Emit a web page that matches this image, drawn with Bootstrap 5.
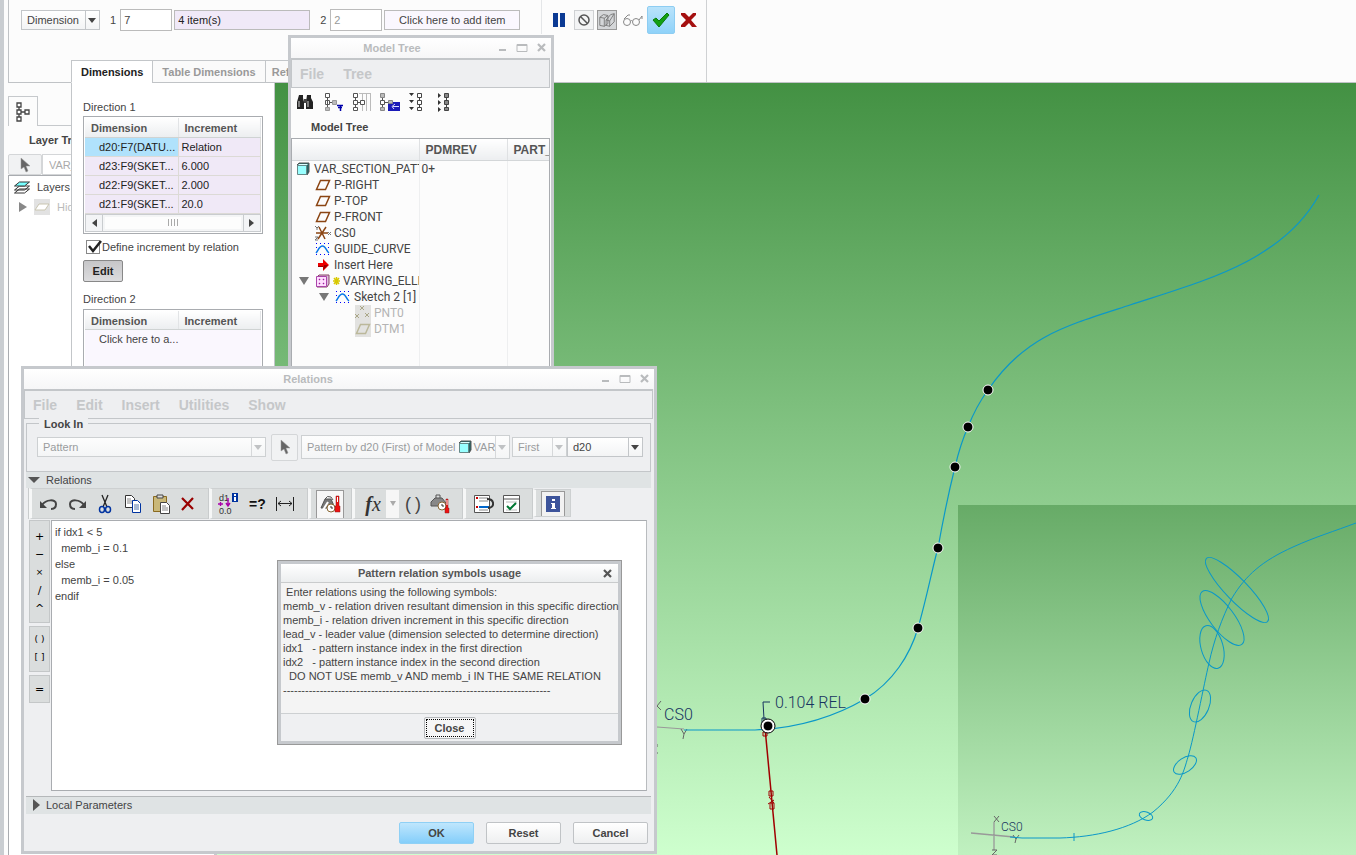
<!DOCTYPE html>
<html lang="en">
<head>
<meta charset="utf-8">
<meta name="viewport" content="width=device-width, initial-scale=1">
<title>Pattern relations</title>
<link href="https://cdn.jsdelivr.net/npm/bootstrap@5.3.0/dist/css/bootstrap.min.css" rel="stylesheet">
<style>
  :root { --edge:#c6c9cd; --line:#c3c6c9; --face:#eeeff1; --ink:#444; --dim:#b9bbbd; }
  html, body { height:100%; }
  body { font:11px/14px "Liberation Sans", Arial, sans-serif; color:var(--ink); background:#fcfcfc; }
  button, input, select, textarea { font:inherit; color:inherit; }
  svg { display:block; flex:none; }
  .app { height:100vh; min-height:855px; border-left:4px solid #c9cdd1; padding-left:4px; }
  .flat { border:0; background:none; padding:0; display:flex; align-items:center; justify-content:center; }

  /* ribbon */
  .ribbon { height:83px; border-bottom:1px solid #c0c3c6; border-left:1px solid #c0c3c6; }
  .ribbon-group { width:698px; height:82px; flex:none; border-right:1px solid #cfd1d3; padding:6px 0 0 12px; }
  .strip { height:28px; }
  .strip label { padding:0 4px 0 10px; }
  .strip .divider { width:33px; height:37px; margin-top:-9px; background:linear-gradient(#e4e6e8,#e4e6e8) 21px 0/1px 100% no-repeat; }
  .field { height:22px; border:1px solid #bbb; background:#fff; padding:0 3px; border-radius:0; min-width:0; }
  .pick { position:relative; display:flex; height:20px; border:1px solid #c3c6c9; background:linear-gradient(#fff,#f3f4f5); }
  .pick select, .pick .flat { appearance:none; border:0; background:none; width:100%; padding:0 14px 0 5px; line-height:18px; }
  .pick::before { content:""; position:absolute; right:0; top:0; bottom:0; width:14px; border-left:1px solid #c3c6c9; pointer-events:none; }
  .pick::after { content:""; position:absolute; right:3px; top:50%; margin-top:-2px; border:4px solid transparent; border-top:5px solid #444; border-bottom:0; pointer-events:none; }
  .pick.off { color:#9a9c9e; border-color:#cdd0d2; background:linear-gradient(#fdfdfd,#f4f5f6); }
  .pick.off::before { border-color:#d6d8da; }
  .pick.off::after { border-top-color:#c0c2c4; }
  .pick select:disabled { opacity:1; color:inherit; }
  .sq { width:20px; height:20px; border:1px solid #cfd1d3; background:#f3f4f5; }
  .accept { width:28px; height:28px; border:1px solid #8ecdf2; border-radius:2px; background:linear-gradient(#b9e3fb,#8fd2f9); }
  .tabs { width:290px; overflow:hidden; padding-left:63px; margin-top:-22px; position:relative; z-index:2; flex:none; }
  .tabs button { height:23px; border:1px solid #c3c6c9; border-bottom:1px solid #c0c3c6; background:#fafafa; color:#999; font-weight:700; padding:0 9px; margin:0 0 0 -1px; white-space:nowrap; flex:none; }
  .tabs button:last-child { padding:0 6px; }
  .tabs button.on { background:#fff; color:#222; border-bottom-color:#fff; }

  /* layer tree on the left */
  .layers { width:209px; border-right:3px solid var(--edge); padding-top:13px; }
  .layers .tabcell { width:30px; height:30px; border:1px solid #c6c9cc; border-bottom:0; }
  .layers .rest { border-bottom:1px solid #c6c9cc; }
  .cursor-btn { border:1px solid #d4d6d8; background:#f1f2f3; border-radius:2px; }

  /* slide-down panel under the ribbon tabs */
  .slide { position:absolute; left:63px; top:0; width:204px; height:300px; background:#fff; border:solid #c3c6c9; border-width:0 1px; padding:17px 11px 0 11px; }
  .grid { border:1px solid #a9acb0; padding:1px; }
  .grid table { width:100%; table-layout:fixed; }
  .grid th { height:19px; padding:2px 6px 0; background:linear-gradient(#fff,#eceef0); color:#555; border-bottom:1px solid #cfd3d3; border-right:1px solid #e2e4e6; }
  .grid td { height:19px; padding:0 3px; background:#f0e9f7; border-bottom:1px solid #dcdad6; border-right:1px solid #dcdad6; color:#222; white-space:nowrap; overflow:hidden; }
  .grid td:first-child { padding-left:14px; }
  .grid td.sel { background:#b0e2fc; }
  .grid td.blank { background:#faf7fe; border:0; color:#444; }
  .sb { height:18px; border:1px solid #c9cccf; background:#f3f4f6; }
  .sb .end { width:16px; }
  .sb .thumb { border:1px solid #c9cccf; border-width:0 1px; background:#fdfdfd; box-shadow:inset 0 0 0 2px #f4f5f6; }
  .tick { appearance:none; width:14px; height:14px; margin:0; border:1px solid #888; background:#fff; }
  .edit { height:22px; width:40px; border:1px solid #888; border-radius:2px; background:linear-gradient(#c6c6c8,#dcdcde); font-weight:700; color:#222; padding:0; }

  /* windows */
  .win { position:absolute; z-index:5; border:3px solid var(--edge); background:#fcfcfc; }
  .bar { height:20px; background:linear-gradient(#fff,#f6f6f7); color:var(--dim); font-weight:700; text-align:center; position:relative; padding-right:58px; }
  .winctl { position:absolute; right:4px; top:0; height:20px; gap:9px; }
  .menus { height:30px; background:var(--face); border:1px solid var(--line); border-top-width:2px; margin-right:1px; gap:19px; padding-left:8px; }
  .menus button { font-size:14px; font-weight:700; color:#c5c7c9; }
  .mtree { left:284px; top:35px; width:266px; height:335px; }
  .mtree .icons { height:29px; padding:5px 0 0 5px; gap:9px; }
  .mtree .box { border:1px solid #a9acb0; border-bottom:0; margin-right:1px; flex:1; overflow:hidden; }
  .mtree table { width:257px; table-layout:fixed; font:12px/16px Roboto, sans-serif; color:#444; }
  .mtree th { height:21px; padding:2px 6px 0; font:bold 12px/18px "Liberation Sans", sans-serif; color:#555; background:linear-gradient(#fff,#eceef0); border-bottom:1px solid #d3d6d8; border-right:1px solid #dfe1e3; overflow:hidden; }
  .mtree th:last-child { border-right:0; }
  .mtree td { height:16px; padding:0 2px; border-right:1px solid #eeeff0; overflow:hidden; white-space:nowrap; }
  .mtree td:last-child { border-right:0; }
  .mtree tr.fill td { height:60px; }
  .node { display:flex; align-items:center; height:16px; gap:3px; }
  .in1 { padding-left:21px; }
  .in2 { padding-left:26px; }
  .in3 { padding-left:61px; color:#b4b4b4; }
  .tri { border:5px solid transparent; border-top:8px solid #777; border-bottom:0; flex:none; }
  .trir { border:5px solid transparent; border-left:8px solid #888; border-right:0; flex:none; }

  .rel { left:17px; top:366px; width:636px; background:var(--face); }
  .look { border:1px solid var(--line); height:49px; margin:4px 3px 0 2px; padding:13px 7px 0 10px; position:relative; }
  .look legend { position:absolute; left:12px; top:-7px; width:auto; padding:0 5px; margin:0; font:bold 11px/14px "Liberation Sans", sans-serif; background:var(--face); color:#444; float:none; }
  .band { height:16px; background:#dfe3e4; margin:0 3px 0 2px; }
  .band button { gap:6px; height:16px; padding-left:2px; }
  .tools { height:32px; padding-left:5px; }
  .grp { height:31px; background:#dadddd; border:1px solid #cdd0d1; border-left:3px solid #f6f7f7; box-shadow:-1px 0 0 #c9cccd; }
  .pressed { border:1px solid #999; border-bottom:0; background:#f7f7f7; width:28px; height:28px; }
  .ops { width:21px; margin-right:1px; }
  .ops > div { background:#dadddd; border:1px solid #c4c7c8; margin-bottom:3px; }
  .ops button { font:11px/17px "DejaVu Sans", sans-serif; height:18px; width:100%; color:#000; }
  .ops button.fine { font-size:9px; }
  .editor { height:271px; border:1px solid #a9acb0; border-right-color:#b9bcbf; padding:3px; line-height:16px; resize:none; display:block; flex:1; background:#fff; border-radius:0; }
  .cmd { width:75px; height:22px; border:1px solid #c0c3c6; border-radius:2px; background:linear-gradient(#fff,#eeeff0); font-weight:700; padding:0; }
  .cmd.ok { border-color:#8fd0f5; background:linear-gradient(#bfe6fd,#84cefa); }

  .help { left:273px; top:560px; width:345px; border:1px solid #999; box-shadow:inset 0 0 0 3px var(--edge); padding:3px; background:#f4f4f4; }
  .help .bar { height:19px; padding-right:0; color:#555; background:linear-gradient(#fff,#eceeef); border-bottom:1px solid #c9cbcc; }
  .help pre { font:inherit; margin:0; padding:2px 0 0 2px; overflow:visible; }
  .help .foot { border-top:1px solid #cdd0d2; background:#eff0f2; height:28px; }
  .close-cmd { width:52px; height:22px; border:1px solid #b4b7ba; border-radius:2px; background:#f6f6f7; padding:1px; font-weight:700; }
  .close-cmd span { display:block; border:1px dotted #000; line-height:16px; }

  /* graphics area */
  .stage { background:linear-gradient(#439143,#ceffce); overflow:hidden; }
  .stage text { font-family:Roboto, sans-serif; font-weight:300; }
</style>
</head>
<body>
<svg width="0" height="0" class="position-absolute">
  <symbol id="plane" viewBox="0 0 16 16"><path d="M5.500 3.500h9l-4 9h-9z" fill="none" stroke="currentColor" stroke-width="1.500"/></symbol>
  <symbol id="sketch" viewBox="0 0 16 16"><g fill="#00f"><path d="M1 2h1v1H1zM5 2h1v1H5zM9 2h1v1H9zM13 2h1v1h-1zM1 6h1v1H1zM13 6h1v1h-1zM1 13h1v1H1zM5 13h1v1H5zM9 13h1v1H9zM13 13h1v1h-1z"/></g><path d="M1 12C3 10 4 5 7.500 5S11 10 14 12" fill="none" stroke="#0a78e8" stroke-width="1.500"/></symbol>
  <symbol id="cube" viewBox="0 0 14 14"><path d="M1 3l2-2h10v9l-2 3z" fill="#266" stroke="#555"/><path d="M1.500 3.500h9v9h-9z" fill="#9ff" stroke="#688"/><path d="M3 2h9l-1 1H2z" fill="#dff"/></symbol>
  <symbol id="cursor" viewBox="0 0 12 16"><path d="M2 1v11l3-2 2 5 2-1-2-5h4z" fill="#666" stroke="#999" stroke-width=".5"/></symbol>
  <symbol id="tree" viewBox="0 0 16 20"><g fill="#fff" stroke="currentColor" stroke-width="1.300"><path d="M4 5v10M6 10h4" /><path d="M2 1h4v4H2zM2 8h4v4H2zM2 15h4v4H2zM10 8h4v4h-4z"/></g></symbol>
  <symbol id="x" viewBox="0 0 10 10"><path d="M1 1l7 7M8 1L1 8" stroke="currentColor" stroke-width="2.200"/></symbol>
</svg>

<div class="app d-flex flex-column position-relative overflow-hidden">
  <header class="ribbon d-flex flex-column">
    <div class="ribbon-group">
      <div class="strip d-flex align-items-center">
        <div class="pick" style="width:79px"><select aria-label="Pattern type"><option>Dimension</option></select></div>
        <label for="n1">1</label>
        <input id="n1" class="field" style="width:52px;margin-right:2px" value="7">
        <input class="field" style="width:136px;height:20px;background:#f0e9f8;color:#222" value="4 item(s)" aria-label="First direction items">
        <label for="n2">2</label>
        <input id="n2" class="field" style="width:52px;color:#999" value="2">
        <input class="field text-center" style="width:136px;height:20px;margin-left:2px;background:#faf7fe" value="Click here to add item" aria-label="Second direction items">
        <span class="divider"></span>
        <button class="flat" aria-label="Pause"><svg width="12" height="14"><path d="M0 0h5v14H0zM7 0h5v14H7z" fill="#0b3a94"/></svg></button>
        <button class="flat sq" style="margin-left:9px" aria-label="No preview"><svg width="14" height="14"><circle cx="7" cy="7" r="5" fill="none" stroke="#555" stroke-width="1.500"/><path d="M3.500 3.500l7 7" stroke="#555" stroke-width="1.500"/></svg></button>
        <button class="flat sq" style="margin:0 5px 0 3px;background:#d4d6d8;border-color:#999" aria-label="Attached preview"><svg width="18" height="18" viewBox="0 0 20 18" fill="none" stroke="#777"><path d="M2 6l4-3 5 1v9l-4 3-5-1zM2 6l5 1v9M7 7l4-3M9 9l5-6 4-1v9l-5 5-4-1zM9 9l4 1v6M13 10l5-8"/></svg></button>
        <button class="flat" aria-label="Glasses"><svg width="21" height="14" fill="none" stroke="#888"><circle cx="5" cy="9" r="3.500"/><circle cx="14" cy="9" r="3.500"/><path d="M8.500 8q1-1 2 0M2 6l4-4h2M17 7l3-4v3"/></svg></button>
        <button class="flat accept ms-1" aria-label="Accept"><svg width="18" height="16"><path d="M1 8l3-2 3 3 8-8 2 2L7 15z" fill="#12a012" stroke="#0a7a0a"/></svg></button>
        <button class="flat" style="margin-left:5px" aria-label="Cancel feature"><svg width="18" height="16"><path d="M1 1h4l4 4 4-4h3v2l-5 5 6 7h-5l-3-4-4 4H1v-2l5-5-5-5z" fill="#a51010"/></svg></button>
      </div>
    </div>
    <nav class="tabs d-flex">
      <button class="on">Dimensions</button><button>Table Dimensions</button><button>References</button>
    </nav>
  </header>

  <main class="d-flex flex-grow-1 position-relative">
    <aside class="layers d-flex flex-column flex-shrink-0">
      <div class="d-flex"><div class="tabcell d-flex align-items-center justify-content-center"><svg width="16" height="20" color="#444"><use href="#tree"/></svg></div><div class="rest flex-grow-1"></div></div>
      <div class="fw-bold" style="padding:7px 0 7px 21px">Layer Tree</div>
      <div class="d-flex ps-0">
        <button class="flat cursor-btn" style="width:34px;height:21px" aria-label="Select"><svg width="12" height="16"><use href="#cursor"/></svg></button>
        <input class="field flex-grow-1" style="height:21px;color:#aaa;padding-left:6px;border-color:#d4d6d8" value="VAR_SECTION_PATTERN" aria-label="Active model">
      </div>
      <div class="bg-white flex-grow-1" style="padding:3px 4px;border:1px solid #a9acb0;border-width:1px 0 0 1px">
        <div class="node" style="gap:6px"><svg width="18" height="16" stroke="#333"><path d="M1.500 14l5-4h10l-5 4zM1.500 11l5-4h10l-5 4z" fill="#fff"/><path d="M1.500 7l5-4h10l-5 4z" fill="#7ff"/></svg>Layers</div>
        <div class="node" style="margin-top:4px;padding-left:6px;gap:7px;color:#bbb"><span class="trir"></span><svg width="16" height="16"><path d="M0 0h16v16H0z" fill="#e2e2e2"/><path d="M1 11l4-6h10l-4 6z" fill="#fff" stroke="#c9c5b0"/></svg>Hidden Items</div>
      </div>
    </aside>

    <section class="stage flex-grow-1">
      <svg width="100%" height="100%" viewBox="217 83 1139 772" preserveAspectRatio="xMinYMin slice" fill="none">
        <defs><linearGradient id="g2" x1="0" y1="0" x2="0" y2="1"><stop stop-color="#67ab67"/><stop offset="1" stop-color="#c0f1c0"/></linearGradient></defs>
        <path d="M657 727L684 729" stroke="#999"/>
        <path d="M661 701l-4 5 4 4M657 744v3M657 752v2" stroke="#666"/>
        <path d="M681 729l3 5 3-5M684 734l-1 5" stroke="#666"/>
        <path d="M684 730H755C800 728 836 716 865 699C893 682 910 655 918 628C927 597 933 565 938 548C943 520 948 495 955 467C959 450 963 438 968 427C973 414 980 401 988 390C1025 336 1065 326 1130 305C1200 282 1282 262 1319 195" stroke="#0b98c8" stroke-width="1.200"/>
        <path d="M765 728L777 855" stroke="#a00000" stroke-width="1.500"/>
        <path d="M769 791h4v5h-4zM770 803h4v6h-4zM768 804l6-4M769 797l5 6M761 728h9M763 732h4v4h-4z" stroke="#a00000"/>
        <path d="M770 702h-7l1 17v8M762 718h4v6h-4z" stroke="#17345f"/>
        <g fill="#000" stroke="#fff"><circle cx="988" cy="390" r="5"/><circle cx="968" cy="427" r="5"/><circle cx="955" cy="467" r="5"/><circle cx="938" cy="548" r="5"/><circle cx="918" cy="628" r="5"/><circle cx="865" cy="699" r="5"/><circle cx="768" cy="726" r="7" stroke="#000" fill="#fff"/><circle cx="768" cy="726" r="5"/></g>
        <text x="664" y="720" font-size="16" fill="#17345f">CS0</text>
        <text x="775" y="708" font-size="16" fill="#17345f">0.104 REL</text>
        <path d="M958 505h398v350H958z" fill="url(#g2)"/>
        <path d="M971 833l43 4M994 822v28" stroke="#999" stroke-width="1.300"/>
        <path d="M994 816l5 6M999 816l-5 6M992 850h5l-5 5h5M1013 835l3 4 3-4M1016 839l-1 4" stroke="#666"/>
        <g stroke="#0b98c8">
          <path d="M1010 837L1022 838H1060C1095 837 1130 829 1153 812C1180 790 1184 770 1188 757C1194 737 1204 684 1209 663C1214 640 1222 618 1232 598C1246 575 1262 561 1293 547C1315 537 1335 531 1356 523M1074 833v8"/>
          <ellipse cx="1237" cy="590" rx="44" ry="11" transform="rotate(46 1237 590)"/>
          <ellipse cx="1222" cy="618" rx="33" ry="12" transform="rotate(53 1222 618)"/>
          <ellipse cx="1212" cy="647" rx="22" ry="11" transform="rotate(74 1212 647)"/>
          <ellipse cx="1200" cy="706" rx="17" ry="9" transform="rotate(-67 1200 706)"/>
          <ellipse cx="1185" cy="765" rx="13" ry="7" transform="rotate(-34 1185 765)"/>
          <ellipse cx="1146" cy="816" rx="7" ry="4" transform="rotate(20 1146 816)"/>
        </g>
        <text x="1001" y="831" font-size="12" fill="#17345f">CS0</text>
      </svg>
    </section>

    <section class="slide">
      <div>Direction 1</div>
      <div class="grid" style="margin-top:2px">
        <table>
          <colgroup><col style="width:93px"><col></colgroup>
          <thead><tr><th>Dimension</th><th>Increment</th></tr></thead>
          <tbody>
            <tr><td class="sel">d20:F7(DATU...</td><td>Relation</td></tr>
            <tr><td>d23:F9(SKET...</td><td>6.000</td></tr>
            <tr><td>d22:F9(SKET...</td><td>2.000</td></tr>
            <tr><td>d21:F9(SKET...</td><td>20.0</td></tr>
          </tbody>
        </table>
        <div class="sb d-flex">
          <button class="flat end" aria-label="Scroll left"><svg width="6" height="8"><path d="M6 0v8L1 4z" fill="#444"/></svg></button>
          <div class="thumb flex-grow-1 d-flex align-items-center justify-content-center"><svg width="12" height="7"><path d="M1.500 0v7M4.500 0v7M7.500 0v7M10.500 0v7" stroke="#aaa"/></svg></div>
          <button class="flat end" aria-label="Scroll right"><svg width="6" height="8"><path d="M0 0v8l5-4z" fill="#444"/></svg></button>
        </div>
      </div>
      <div class="d-flex align-items-center position-relative" style="padding:6px 0 0 3px">
        <input id="rel" type="checkbox" class="tick" checked><label for="rel" style="padding-left:2px;white-space:nowrap">Define increment by relation</label>
        <svg class="position-absolute pe-none" style="left:4px" width="16" height="14"><path d="M2 6l4 5 8-10" fill="none" stroke="#222" stroke-width="2.500"/></svg>
      </div>
      <button class="edit" style="margin-top:6px">Edit</button>
      <div style="margin-top:10px">Direction 2</div>
      <div class="grid" style="margin-top:3px">
        <table>
          <colgroup><col style="width:93px"><col></colgroup>
          <thead><tr><th>Dimension</th><th>Increment</th></tr></thead>
          <tbody><tr><td class="blank" colspan="2">Click here to a...</td></tr><tr><td class="blank" colspan="2"></td></tr></tbody>
        </table>
      </div>
    </section>
  </main>

  <!-- Model tree window -->
  <section class="win mtree d-flex flex-column">
    <div class="bar d-flex align-items-center justify-content-center">Model Tree
      <div class="winctl d-flex align-items-center"><svg width="8" height="10"><path d="M0 6h7v2H0z" fill="#b9bbbd"/></svg><svg width="12" height="10"><path d="M1 1.500h10v7H1z" fill="none" stroke="#b9bbbd"/><path d="M1 1h10v2H1z" fill="#b9bbbd"/></svg><button class="flat" aria-label="Close tree"><svg width="10" height="10"><use href="#x"/></svg></button></div>
    </div>
    <div class="menus d-flex"><button class="flat">File</button><button class="flat">Tree</button></div>
    <div class="icons d-flex align-items-start">
      <button class="flat" aria-label="Find"><svg width="18" height="18"><path d="M3 2h4v3l1 4v7H1V9zM11 2h4v3l2 4v7h-7V9z" fill="#222"/><path d="M8 6h3v4H8z" fill="#444"/><path d="M3 8v6M12 8v6" stroke="#999" stroke-width="1.500"/></svg></button>
      <button class="flat" aria-label="Filters"><svg width="20" height="20" fill="#fff" stroke="#555"><path d="M2.500 .5h4v4h-4zM4.500 5v9M2.500 7.500h4v4h-4zM6 9.500h4"/><path d="M2.500 14.500h4v3h-4zM9.500 7.500h4v4h-4z" fill="#bbb" stroke="#999"/><path d="M14 12.500h7M15 14.500h4M17.500 13v5" stroke="#00a" stroke-width="1.500"/></svg></button>
      <button class="flat" aria-label="Columns"><svg width="19" height="20" fill="#fff" stroke="#555"><path d="M10.500 1v17M14.500 1v17M18.500 1v17M7 .5h12" stroke="#bbb"/><path d="M1.500 .5h4v4h-4zM1.500 7.500h4v4h-4zM1.500 14.500h4v3h-4zM8.500 7.500h4v4h-4zM3.500 5v2M3.500 12v2M6 9.500h2"/></svg></button>
      <button class="flat" aria-label="Settings"><svg width="20" height="20" stroke="#555"><path d="M.5 .5h4v4h-4zM.5 14.500h4v3h-4z" fill="#bbb" stroke="#888"/><path d="M.5 7.500h4v4h-4zM2.500 5v2M2.500 12v2M5 9.500h3" fill="#fff"/><path d="M8 9h12v9H8z" fill="#1a1ab8" stroke="none"/><path d="M15 11l-3 2.500 2 2.500M13 13.500h6" fill="none" stroke="#ddf"/><path d="M8.500 7.500h4v3h-4z" fill="#bbb" stroke="#888"/></svg></button>
      <button class="flat" aria-label="Expand all"><svg width="14" height="20"><path d="M0 0h5L2.500 3zM0 7h5l-2.500 3zM0 14h5l-2.500 3z" fill="#333"/><path d="M8.500 .5h4v4h-4zM8.500 7.500h4v4h-4zM8.500 14.500h4v3h-4zM10.500 5v2M10.500 12v2" fill="#fff" stroke="#444"/></svg></button>
      <button class="flat ms-1" aria-label="Collapse all"><svg width="14" height="20"><path d="M2 0v5l3-2.500zM2 7v5l3-2.500zM2 14v5l3-2.500z" fill="#333"/><path d="M8.500 .5h4v4h-4zM8.500 7.500h4v4h-4zM8.500 14.500h4v3h-4zM10.500 5v2M10.500 12v2" fill="#888" stroke="#444"/></svg></button>
    </div>
    <div class="fw-bold" style="padding:3px 0 4px 20px">Model Tree</div>
    <div class="box">
      <table>
        <colgroup><col style="width:127px"><col style="width:88px"><col></colgroup>
        <thead><tr><th></th><th>PDMREV</th><th>PART_</th></tr></thead>
        <tbody>
          <tr><td><div class="node" style="gap:4px;padding-left:2px"><svg width="14" height="14"><use href="#cube"/></svg>VAR_SECTION_PATTERN</div></td><td>0+</td><td></td></tr>
          <tr><td><div class="node in1"><svg width="16" height="16" color="#8b4513"><use href="#plane"/></svg>P-RIGHT</div></td><td></td><td></td></tr>
          <tr><td><div class="node in1"><svg width="16" height="16" color="#8b4513"><use href="#plane"/></svg>P-TOP</div></td><td></td><td></td></tr>
          <tr><td><div class="node in1"><svg width="16" height="16" color="#8b4513"><use href="#plane"/></svg>P-FRONT</div></td><td></td><td></td></tr>
          <tr><td><div class="node in1"><svg width="16" height="16"><path d="M1 8h12M4 2l6 12M11 2L3 14" stroke="#8b4513" stroke-width="1.500"/><path d="M0 1l2 2 2-2M2 3v2M13 7l3 3M16 7l-3 3M0 12h3l-3 3h3" stroke="#777" fill="none"/></svg>CS0</div></td><td></td><td></td></tr>
          <tr><td><div class="node in1"><svg width="16" height="16"><use href="#sketch"/></svg>GUIDE_CURVE</div></td><td></td><td></td></tr>
          <tr><td><div class="node in1"><svg width="16" height="16"><path d="M3 6h5V2l6 6-6 6v-4H3z" fill="#e00"/><path d="M3 9h5v1H3zM8 13l5-5H9z" fill="#900"/></svg>Insert Here</div></td><td></td><td></td></tr>
          <tr><td><div class="node" style="gap:1px;padding-left:5px"><span class="tri"></span><svg style="margin-left:5px" width="16" height="16"><path d="M2 4l2-2h10v9l-2 3H2z" fill="#dbd" stroke="#846"/><path d="M1.500 3.500h10v10h-10z" fill="#fdf" stroke="#a4a"/><path d="M4 6h1v1H4zM8 6h1v1H8zM4 10h1v1H4zM8 10h1v1H8z" fill="#808" stroke="#a3a" stroke-width=".5"/></svg><svg width="10" height="10" stroke="#d8c800" stroke-width="1.500"><path d="M4.500 1v8M1 5h7M2 2l5 6M7 2L2 8"/></svg>VARYING_ELLIPSE</div></td><td></td><td></td></tr>
          <tr><td><div class="node" style="padding-left:25px"><span class="tri"></span><svg width="16" height="16" style="margin-left:3px"><use href="#sketch"/></svg>Sketch 2 [1]</div></td><td></td><td></td></tr>
          <tr><td><div class="node in3"><svg width="16" height="16"><path d="M0 0h16v16H0z" fill="#e2e2e0"/><path d="M5 1l4 4M9 1L5 5M0 9l4 4M4 9l-4 4M10 8l4 4M14 8l-4 4" stroke="#aaa788"/></svg>PNT0</div></td><td></td><td></td></tr>
          <tr><td><div class="node in3"><svg width="16" height="16" color="#bbb89a"><path d="M0 0h16v16H0z" fill="#e2e2e0"/><use href="#plane"/></svg>DTM1</div></td><td></td><td></td></tr>
          <tr class="fill"><td></td><td></td><td></td></tr>
        </tbody>
      </table>
    </div>
  </section>

  <!-- Relations window -->
  <section class="win rel">
    <div class="bar d-flex align-items-center justify-content-center" style="padding-right:62px">Relations
      <div class="winctl d-flex align-items-center"><svg width="8" height="10"><path d="M0 6h7v2H0z" fill="#b9bbbd"/></svg><svg width="12" height="10"><path d="M1 1.500h10v7H1z" fill="none" stroke="#b9bbbd"/><path d="M1 1h10v2H1z" fill="#b9bbbd"/></svg><button class="flat" aria-label="Close relations"><svg width="10" height="10"><use href="#x"/></svg></button></div>
    </div>
    <div class="menus d-flex"><button class="flat">File</button><button class="flat">Edit</button><button class="flat">Insert</button><button class="flat">Utilities</button><button class="flat">Show</button></div>
    <fieldset class="look">
      <legend>Look In</legend>
      <div class="d-flex align-items-center" style="height:20px">
        <div class="pick off" style="width:229px"><select disabled aria-label="Object type"><option>Pattern</option></select></div>
        <button class="flat cursor-btn" style="width:27px;height:27px;margin:0 3px 0 5px" aria-label="Pick object"><svg width="12" height="16"><use href="#cursor"/></svg></button>
        <div class="pick off" style="width:209px;height:24px"><button class="flat justify-content-start" style="white-space:nowrap;overflow:hidden" disabled><span style="color:#9a9c9e">Pattern by d20 (First) of Model</span><svg width="14" height="14" style="margin:0 2px"><use href="#cube"/></svg><span style="color:#9a9c9e">VAR</span></button></div>
        <div class="pick off" style="width:55px;margin-left:2px"><select disabled aria-label="Instance"><option>First</option></select></div>
        <div class="pick flex-grow-1"><select aria-label="Dimension"><option>d20</option></select></div>
      </div>
    </fieldset>
    <div class="band"><button class="flat"><span class="tri" style="border-width:6px 6px 0;border-top-color:#555"></span>Relations</button></div>
    <div class="tools d-flex">
      <div class="grp d-flex align-items-center" style="width:180px;padding-left:8px;gap:10px">
        <button class="flat" aria-label="Undo"><svg width="18" height="16" fill="none" stroke="#444" stroke-width="2"><path d="M2 9C6 3 16 3 16 8c0 3-2 5-5 5"/><path d="M0 5v7h7z" fill="#444" stroke="none"/></svg></button>
        <button class="flat" aria-label="Redo"><svg width="18" height="16" fill="none" stroke="#444" stroke-width="2"><path d="M16 9C12 3 2 3 2 8c0 3 2 5 5 5"/><path d="M18 5v7h-7z" fill="#444" stroke="none"/></svg></button>
        <button class="flat" aria-label="Cut"><svg width="18" height="20" fill="none"><path d="M6 1l5 12M12 1L7 13" stroke="#222" stroke-width="1.300"/><ellipse cx="6" cy="15.500" rx="2.500" ry="3" stroke="#0033a0" stroke-width="1.500"/><ellipse cx="12" cy="15.500" rx="2.500" ry="3" stroke="#0033a0" stroke-width="1.500"/></svg></button>
        <button class="flat" aria-label="Copy"><svg width="18" height="20" fill="#fff"><path d="M1.500 1.500h6l3 3v9h-9z" stroke="#333"/><path d="M3 5h4M3 7h6M3 9h6" stroke="#888"/><path d="M8.500 6.500h5l3 3v9h-8z" stroke="#0033a0"/><path d="M10 11h5M10 13h5M10 15h5" stroke="#57a"/></svg></button>
        <button class="flat" aria-label="Paste"><svg width="18" height="20"><path d="M1.500 2.500h13v15h-13z" fill="#c9b87a" stroke="#8a6a20"/><path d="M5 1h6v3H5z" fill="#ddd" stroke="#444"/><path d="M8.500 8.500h6l3 3v8h-9z" fill="#fff" stroke="#444"/><path d="M10 12h4M10 14h6M10 16h6" stroke="#888"/></svg></button>
        <button class="flat" aria-label="Delete"><svg width="16" height="16"><path d="M2 2l11 11M13 2L2 14" stroke="#900" stroke-width="2.200"/></svg></button>
      </div>
      <div class="grp d-flex align-items-center" style="width:99px;padding-left:6px;gap:9px">
        <button class="flat" aria-label="Switch dimensions"><svg width="22" height="22"><text x="1" y="8" font-size="9" fill="#333">d1</text><text x="1" y="21" font-size="9" fill="#333">0.0</text><path d="M14 0h6v9h-6z" fill="#0033a0"/><path d="M16 4h2v4h-2zM16 1h2v2h-2z" fill="#fff"/><path d="M0 11h5M2.500 9v4M10 5v7M8 10l2 3 2-3" stroke="#a0a" fill="none" stroke-width="1.400"/></svg></button>
        <button class="flat fw-bold" style="font-size:14px;color:#111" aria-label="Evaluate">=?</button>
        <button class="flat" aria-label="Measure"><svg width="20" height="16" fill="none" stroke="#222"><path d="M1.500 1v14M18.500 1v14M3 7.500h14M6 5L3 7.500 6 10M14 5l3 2.500-3 2.500"/></svg></button>
      </div>
      <div class="grp d-flex align-items-center" style="width:44px;padding-left:5px">
        <button class="flat pressed" aria-label="Units"><svg width="22" height="20"><path d="M2 14l4-9h6l4 9z" fill="#777" stroke="#555"/><path d="M6 5q2-4 6-2l2 3" fill="none" stroke="#555"/><path d="M4 16l5-8" stroke="#fff" stroke-width="2"/><circle cx="12" cy="14" r="4" fill="#fff" stroke="#863"/><path d="M12 12v2h2" stroke="#333" fill="none"/><path d="M17 2h3v10h1v6h-5v-6h1z" fill="#e11" stroke="#822" stroke-width=".5"/><path d="M18 3h1v5h-1z" fill="#fff"/></svg></button>
      </div>
      <div class="grp d-flex align-items-center" style="width:111px;padding-left:7px">
        <button class="flat" style="font:italic 20px/22px 'Liberation Serif',serif;color:#333;width:22px" aria-label="Insert function"><b>f</b>x</button>
        <button class="flat" style="background:#f6f6f6;width:13px;height:28px;margin-left:2px" aria-label="Function menu"><span class="tri" style="border-width:5px 3px 0;border-top-color:#aaa"></span></button>
        <button class="flat" style="font-size:18px;width:28px;gap:4px" aria-label="Insert parameter"><span>(</span><span>)</span></button>
        <button class="flat" style="margin-left:3px" aria-label="Insert units"><svg width="22" height="20"><path d="M1 8l4-4h7l4 5v3H1z" fill="#888" stroke="#555"/><path d="M6 4V1h4v3" fill="none" stroke="#555"/><circle cx="12" cy="12" r="4" fill="#fff" stroke="#863"/><path d="M12 10v2h2" stroke="#333" fill="none"/><path d="M16 5h2v9h1v5h-4v-5h1z" fill="#e11" stroke="#822" stroke-width=".5"/><path d="M16.500 6h1v5h-1z" fill="#fff"/></svg></button>
      </div>
      <div class="grp d-flex align-items-center" style="width:70px;padding-left:7px;gap:8px">
        <button class="flat" aria-label="Sort"><svg width="21" height="20"><path d="M1.500 1.500h15v17h-15z" fill="#fff" stroke="#555"/><path d="M6 4h9M6 7h9M6 16h9" stroke="#888"/><path d="M3 3h2v2H3zM3 12h2v2H3z" fill="#c00"/><path d="M6 13h10" stroke="#06c" stroke-width="2"/><path d="M14 5c8 0 8 9 1 9" fill="none" stroke="#333" stroke-width="2"/></svg></button>
        <button class="flat" aria-label="Verify"><svg width="19" height="20"><path d="M1.500 1.500h16v17h-16z" fill="#fff" stroke="#555"/><path d="M2 5h15" stroke="#555"/><path d="M4 8h11M4 16h11" stroke="#bbb"/><path d="M5 12l3 3 6-6" stroke="#073" stroke-width="2" fill="none"/></svg></button>
      </div>
      <div class="grp d-flex align-items-center justify-content-center" style="width:38px;height:28px;margin-top:1px">
        <button class="flat" style="width:24px;height:25px;border:1px solid #999;border-bottom:0;background:#f2f2f2" aria-label="Info"><svg width="14" height="16"><path d="M0 0h14v16H0z" fill="#3d549b"/><path d="M6 3h3v2H6zM5 7h4v5h1v1H5v-1h1V8H5z" fill="#fff"/></svg></button>
      </div>
    </div>
    <div class="d-flex" style="padding:0 7px 0 5px">
      <div class="ops">
        <div style="padding:6px 0 5px"><button class="flat">+</button><button class="flat">−</button><button class="flat fine">×</button><button class="flat">/</button><button class="flat">^</button></div>
        <div style="padding:3px 0 5px"><button class="flat fine">( )</button><button class="flat fine">[ ]</button></div>
        <div style="padding:4px 0"><button class="flat">=</button></div>
      </div>
      <textarea class="editor" aria-label="Relations" spellcheck="false">if idx1 &lt; 5
  memb_i = 0.1
else
  memb_i = 0.05
endif</textarea>
    </div>
    <div style="height:6px;margin:0 3px 0 2px;border-bottom:1px solid #b5b8ba"></div>
    <div class="band" style="height:17px"><button class="flat" style="padding-left:7px"><span class="trir" style="border-width:6px 0 6px 7px;border-left-color:#555"></span>Local Parameters</button></div>
    <div class="d-flex justify-content-end" style="gap:12px;padding:8px 6px 7px">
      <button class="cmd ok">OK</button><button class="cmd">Reset</button><button class="cmd">Cancel</button>
    </div>
  </section>

  <!-- Help dialog -->
  <section class="win help" role="dialog" aria-label="Pattern relation symbols usage">
    <div class="bar d-flex align-items-center justify-content-center" style="padding-right:20px">Pattern relation symbols usage
      <div class="winctl d-flex align-items-center"><button class="flat" aria-label="Dismiss"><svg width="12" height="10"><use href="#x"/></svg></button></div>
    </div>
    <pre> Enter relations using the following symbols:
memb_v - relation driven resultant dimension in this specific direction
memb_i - relation driven increment in this specific direction
lead_v - leader value (dimension selected to determine direction)
idx1   - pattern instance index in the first direction
idx2   - pattern instance index in the second direction
  DO NOT USE memb_v AND memb_i IN THE SAME RELATION
-------------------------------------------------------------------------</pre>
    <div style="height:16px"></div>
    <div class="foot d-flex align-items-center justify-content-center"><button class="close-cmd"><span>Close</span></button></div>
  </section>
</div>
<script src="https://cdn.jsdelivr.net/npm/bootstrap@5.3.0/dist/js/bootstrap.bundle.min.js"></script>
</body>
</html>
